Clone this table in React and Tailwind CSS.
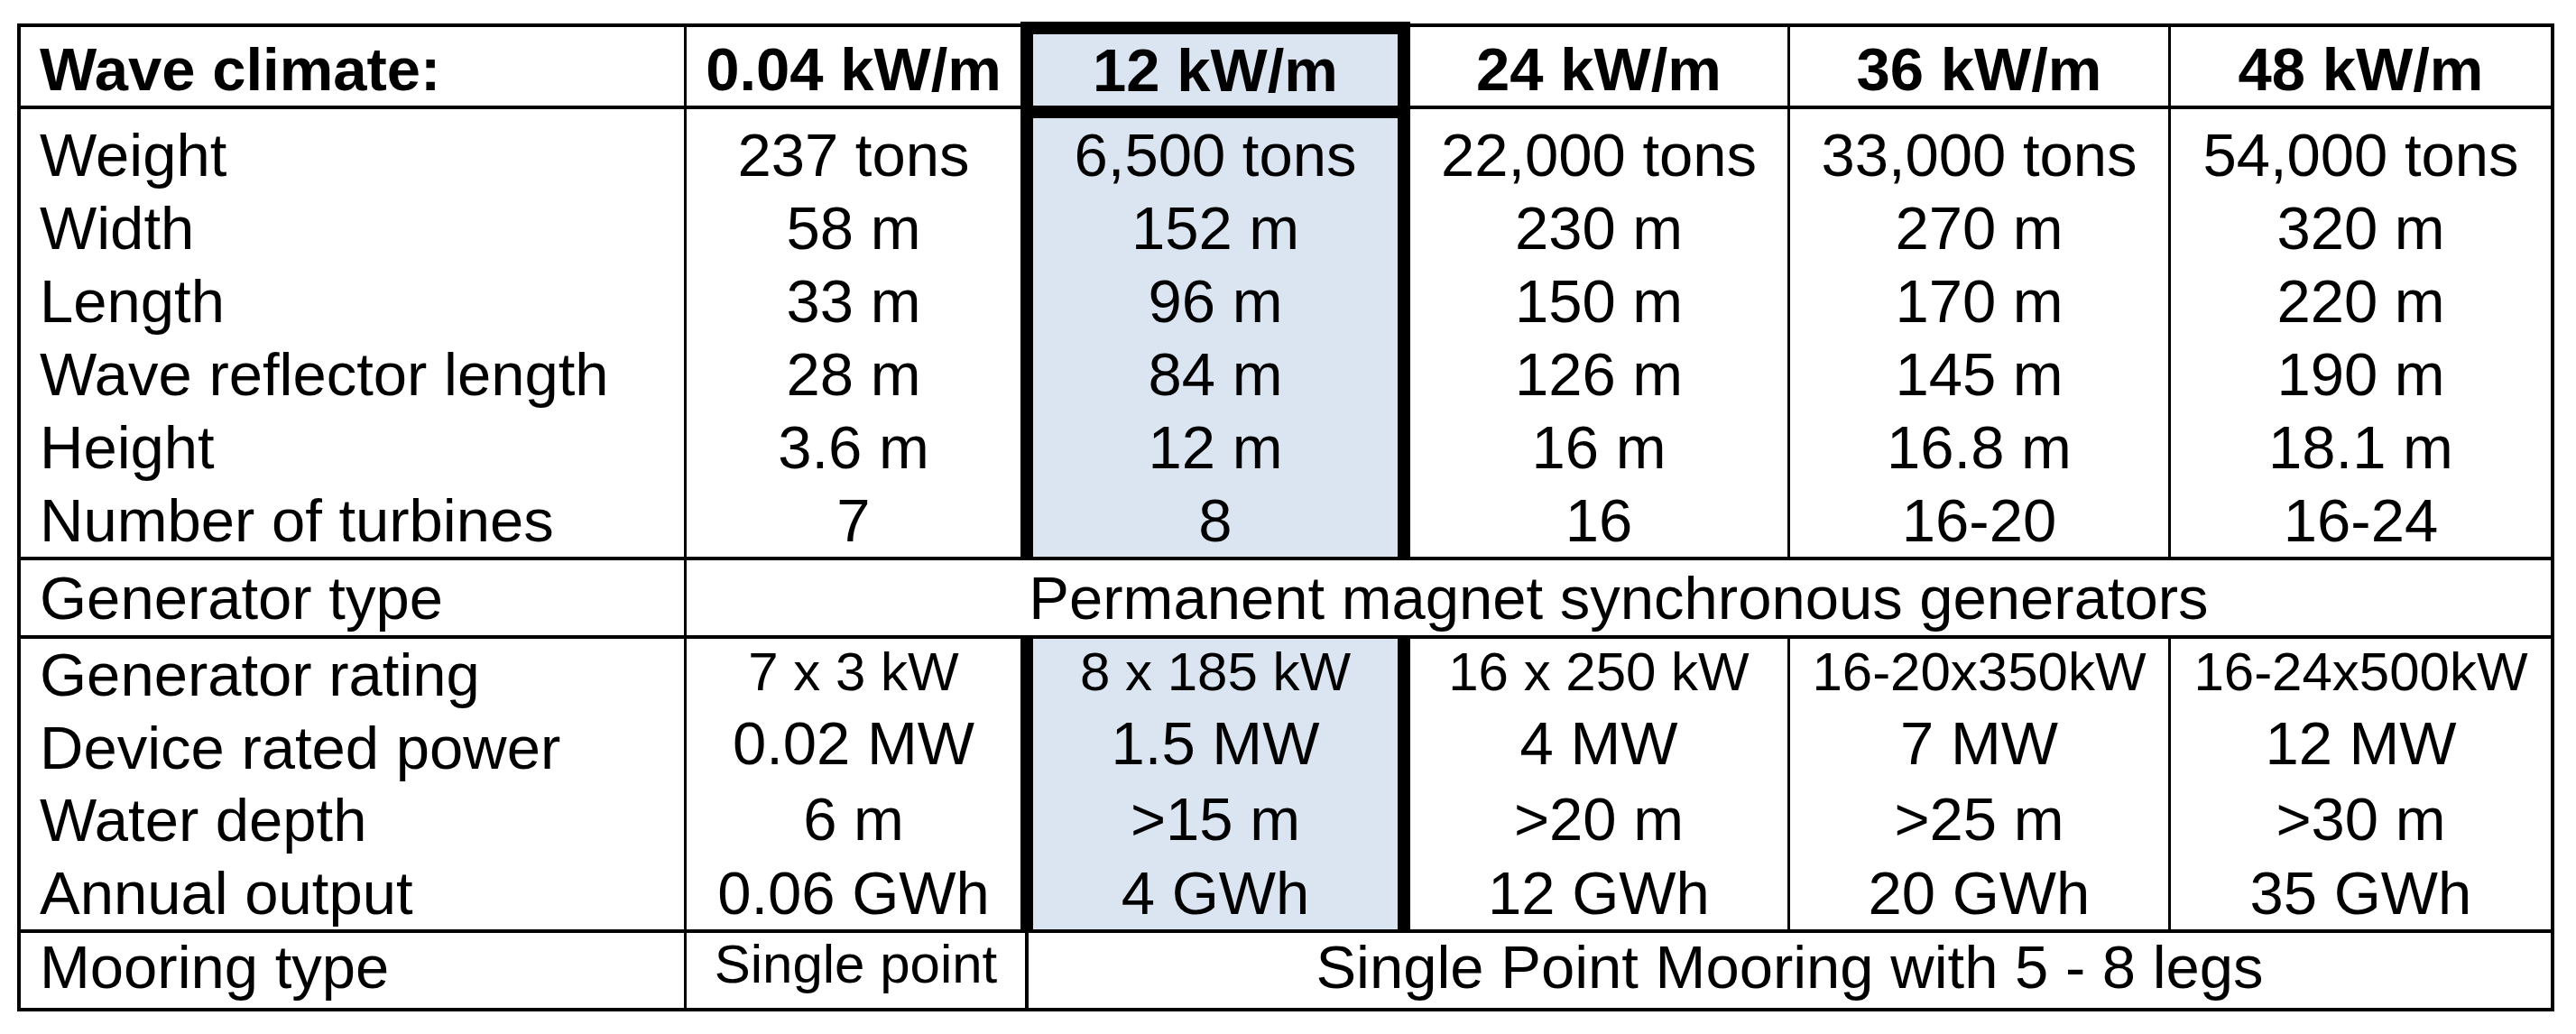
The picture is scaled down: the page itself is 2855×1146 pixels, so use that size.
import React from 'react'

const top = {
  labels: ['Weight', 'Width', 'Length', 'Wave reflector length', 'Height', 'Number of turbines'],
  cols: [
    ['237 tons', '58 m', '33 m', '28 m', '3.6 m', '7'],
    ['6,500 tons', '152 m', '96 m', '84 m', '12 m', '8'],
    ['22,000 tons', '230 m', '150 m', '126 m', '16 m', '16'],
    ['33,000 tons', '270 m', '170 m', '145 m', '16.8 m', '16-20'],
    ['54,000 tons', '320 m', '220 m', '190 m', '18.1 m', '16-24'],
  ],
}

const bottom = {
  labels: ['Generator rating', 'Device rated power', 'Water depth', 'Annual output'],
  cols: [
    ['7 x 3 kW', '0.02 MW', '6 m', '0.06 GWh'],
    ['8 x 185 kW', '1.5 MW', '>15 m', '4 GWh'],
    ['16 x 250 kW', '4 MW', '>20 m', '12 GWh'],
    ['16-20x350kW', '7 MW', '>25 m', '20 GWh'],
    ['16-24x500kW', '12 MW', '>30 m', '35 GWh'],
  ],
}

// row heights for the lower block: value columns start with a smaller first line
const labelRows = ['h-[80.5px] leading-[80.5px]', 'h-[80.5px] leading-[80.5px]', 'h-[80.5px] leading-[80.5px]', 'h-[80.5px] leading-[80.5px]']
const valueRows = ['h-[74px] leading-[74px] text-[60px]', 'h-[84px] leading-[84px]', 'h-[84px] leading-[84px]', 'h-[80px] leading-[80px]']

function Lines({ items, rows }) {
  return items.map((t, i) => (
    <div key={i} className={rows ? rows[i] : 'h-[81px] leading-[81px]'}>{t}</div>
  ))
}

export default function App() {
  const cellW = [
    'w-[370px]',
    'w-[432px] border-x-[14px] border-black bg-[#dbe5f1]',
    'w-[421px] border-r-[3px] border-black',
    'w-[422px] border-r-[3px] border-black',
    'w-[421px]',
  ]

  return (
    <div className="min-h-screen bg-white pt-[26px] pl-[19px] text-black font-['Liberation_Sans',Arial,sans-serif] text-[67px] whitespace-nowrap">
      <div className="w-[2812px] border-4 border-black flex flex-col">
        {/* header */}
        <div className="flex h-[91px] border-b-4 border-black font-bold">
          <div className="w-[738px] border-r-[3px] border-black pl-[21px] pt-[6px] leading-[81px]">Wave climate:</div>
          <div className="w-[370px] text-center pt-[6px] leading-[81px]">0.04 kW/m</div>
          <div className="relative z-10 w-[432px] -mt-[6px] -mb-[14px] border-[14px] border-black bg-[#dbe5f1] text-center leading-[79px]">12 kW/m</div>
          <div className="w-[421px] border-r-[3px] border-black text-center pt-[6px] leading-[81px]">24 kW/m</div>
          <div className="w-[422px] border-r-[3px] border-black text-center pt-[6px] leading-[81px]">36 kW/m</div>
          <div className="w-[421px] text-center pt-[6px] leading-[81px]">48 kW/m</div>
        </div>

        {/* dimensions */}
        <div className="flex h-[500px] border-b-4 border-black">
          <div className="w-[738px] border-r-[3px] border-black pl-[21px] pt-[10px]">
            <Lines items={top.labels} />
          </div>
          {top.cols.map((col, i) => (
            <div key={i} className={cellW[i] + ' text-center pt-[10px]'}>
              <Lines items={col} />
            </div>
          ))}
        </div>

        {/* generator type */}
        <div className="flex h-[87px] border-b-4 border-black">
          <div className="w-[738px] border-r-[3px] border-black pl-[21px] leading-[83px]">Generator type</div>
          <div className="flex-1 text-center leading-[83px]">Permanent magnet synchronous generators</div>
        </div>

        {/* ratings */}
        <div className="flex h-[326px] border-b-4 border-black">
          <div className="w-[738px] border-r-[3px] border-black pl-[21px]">
            <Lines items={bottom.labels} rows={labelRows} />
          </div>
          {bottom.cols.map((col, i) => (
            <div key={i} className={cellW[i] + ' text-center'}>
              <Lines items={col} rows={valueRows} />
            </div>
          ))}
        </div>

        {/* mooring */}
        <div className="flex h-[83px]">
          <div className="w-[738px] border-r-[3px] border-black pl-[21px] leading-[76px]">Mooring type</div>
          <div className="w-[379px] border-r-4 border-black text-center text-[60px] leading-[70px]">Single point</div>
          <div className="flex-1 text-center leading-[76px]">Single Point Mooring with 5 - 8 legs</div>
        </div>
      </div>
    </div>
  )
}
